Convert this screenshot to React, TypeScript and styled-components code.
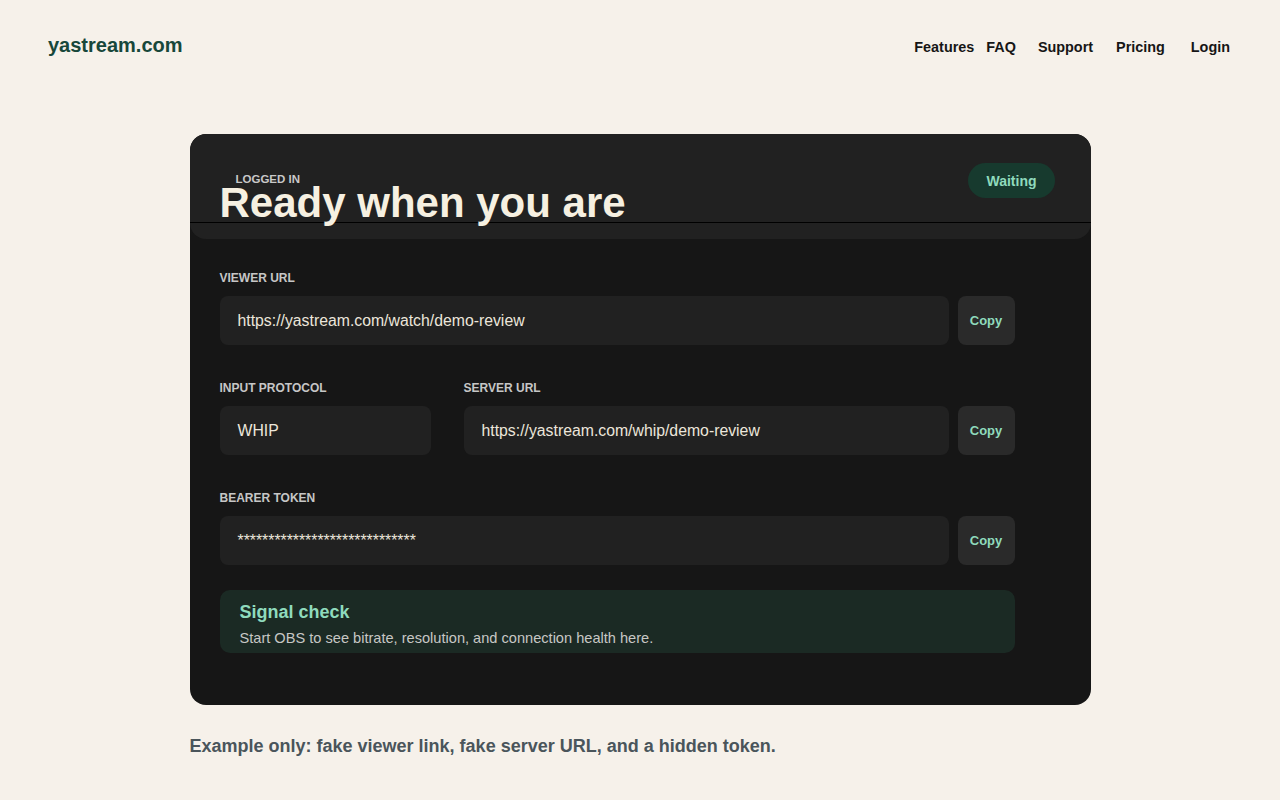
import React from 'react';
import styled, { createGlobalStyle } from 'styled-components';

const GlobalStyle = createGlobalStyle`
  html, body {
    margin: 0;
    padding: 0;
    background: #f6f1ea;
    font-family: "Liberation Sans", Arial, sans-serif;
  }
`;

const Page = styled.div`
  min-height: 800px;
  display: flex;
  flex-direction: column;
`;

const TopBar = styled.header`
  display: flex;
  justify-content: space-between;
  align-items: center;
  height: 92px;
  padding: 0 50px 0 48px;
`;

const Brand = styled.div`
  font-size: 20px;
  font-weight: 700;
  color: #17473a;
  margin-top: -2px;
`;

const Nav = styled.nav`
  display: flex;
  align-items: center;
  margin-top: 2px;
`;

const NavLink = styled.a<{ $gap: number }>`
  margin-left: ${p => p.$gap}px;
  font-size: 14.4px;
  font-weight: 700;
  color: #161616;
  text-decoration: none;
`;

const Main = styled.main`
  width: 901px;
  margin: 42px auto 0;
`;

const Card = styled.section`
  background: #161616;
  border-radius: 16px;
  padding-bottom: 52px;
  overflow: hidden;
`;

const Header = styled.div`
  background: #212121;
  border-radius: 16px;
  padding-bottom: 16px;
`;

const HeaderRow = styled.div`
  display: flex;
  justify-content: space-between;
  align-items: flex-start;
  padding: 30px 36px 0 30px;
  height: 58px;
  border-bottom: 1px solid #000;
`;

const TitleBlock = styled.div`
  display: flex;
  flex-direction: column;
`;

const Eyebrow = styled.span`
  padding-left: 16px;
  margin-top: 9px;
  font-size: 11.5px;
  font-weight: 700;
  color: #c9c9c9;
  line-height: 12px;
`;

const Title = styled.h1`
  margin: 0;
  font-size: 42px;
  line-height: 36px;
  font-weight: 700;
  color: #f6f0e1;
`;

const Badge = styled.span`
  margin-top: -1px;
  padding: 0 18px;
  height: 35px;
  display: inline-flex;
  align-items: center;
  border-radius: 18px;
  background: #173a2e;
  color: #8fdbbd;
  font-size: 14px;
  font-weight: 700;
`;

const Body = styled.div`
  width: 795px;
  padding: 32px 0 0 30px;
  display: flex;
  flex-direction: column;
  gap: 36px;
`;

const Field = styled.div`
  display: flex;
  flex-direction: column;
  gap: 11px;
`;

const Label = styled.label`
  font-size: 12px;
  font-weight: 700;
  color: #c6c6c6;
  line-height: 14px;
  text-transform: uppercase;
`;

const InputRow = styled.div`
  display: flex;
  gap: 9px;
`;

const Value = styled.div`
  flex: 1;
  height: 49px;
  display: flex;
  align-items: center;
  padding: 0 18px;
  border-radius: 8px;
  background: #212121;
  color: #ece6db;
  font-size: 15.8px;
  overflow: hidden;
  white-space: nowrap;
`;

const CopyButton = styled.button`
  width: 57px;
  height: 49px;
  border: none;
  border-radius: 8px;
  background: #2a2a2a;
  color: #8fdbbd;
  font-family: inherit;
  font-size: 13px;
  font-weight: 700;
  cursor: pointer;
`;

const SplitRow = styled.div`
  display: grid;
  grid-template-columns: 211px 1fr;
  gap: 33px;
`;

const SignalBox = styled.div`
  margin-top: -11px;
  background: #1b2a24;
  border-radius: 10px;
  padding: 12px 20px 7px;
  display: flex;
  flex-direction: column;
  gap: 7px;
`;

const SignalTitle = styled.div`
  font-size: 18px;
  font-weight: 700;
  color: #8fdbbd;
`;

const SignalText = styled.div`
  font-size: 14.6px;
  color: #c7c7c4;
`;

const Note = styled.p`
  margin: 31px 0 0;
  font-size: 18px;
  font-weight: 700;
  color: #4a555b;
`;

const links: [string, number][] = [
  ['Features', 0],
  ['FAQ', 12],
  ['Support', 22],
  ['Pricing', 23],
  ['Login', 26],
];

export default function App() {
  return (
    <Page>
      <GlobalStyle />
      <TopBar>
        <Brand>yastream.com</Brand>
        <Nav>
          {links.map(([name, gap]) => (
            <NavLink key={name} href="#" $gap={gap}>{name}</NavLink>
          ))}
        </Nav>
      </TopBar>
      <Main>
        <Card>
          <Header>
            <HeaderRow>
              <TitleBlock>
                <Eyebrow>LOGGED IN</Eyebrow>
                <Title>Ready when you are</Title>
              </TitleBlock>
              <Badge>Waiting</Badge>
            </HeaderRow>
          </Header>
          <Body>
            <Field>
              <Label>Viewer URL</Label>
              <InputRow>
                <Value>https://yastream.com/watch/demo-review</Value>
                <CopyButton>Copy</CopyButton>
              </InputRow>
            </Field>
            <SplitRow>
              <Field>
                <Label>Input protocol</Label>
                <Value>WHIP</Value>
              </Field>
              <Field>
                <Label>Server URL</Label>
                <InputRow>
                  <Value>https://yastream.com/whip/demo-review</Value>
                  <CopyButton>Copy</CopyButton>
                </InputRow>
              </Field>
            </SplitRow>
            <Field>
              <Label>Bearer token</Label>
              <InputRow>
                <Value>*****************************</Value>
                <CopyButton>Copy</CopyButton>
              </InputRow>
            </Field>
            <SignalBox>
              <SignalTitle>Signal check</SignalTitle>
              <SignalText>Start OBS to see bitrate, resolution, and connection health here.</SignalText>
            </SignalBox>
          </Body>
        </Card>
        <Note>Example only: fake viewer link, fake server URL, and a hidden token.</Note>
      </Main>
    </Page>
  );
}
